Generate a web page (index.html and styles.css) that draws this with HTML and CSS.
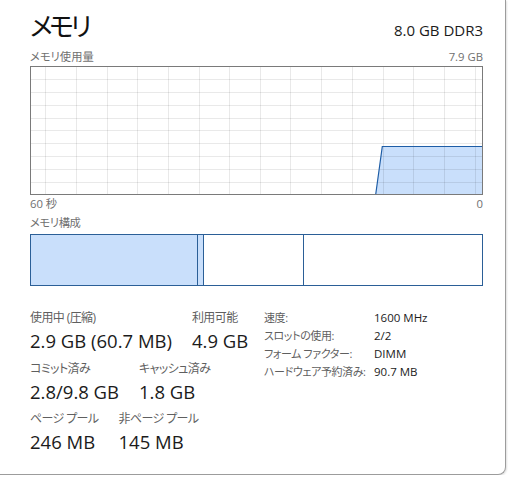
FILE: index.html
```html
<!DOCTYPE html>
<html lang="ja">
<head>
<meta charset="utf-8">
<title>メモリ</title>
<link rel="stylesheet" href="styles.css">
</head>
<body>
<div class="window">
  <div class="header">
    <div class="title">メモリ</div>
    <div class="spec">8.0 GB DDR3</div>
  </div>
  <div class="axis axis-top"><span>メモリ使用量</span><span>7.9 GB</span></div>
  <svg class="graph" width="453" height="129" viewBox="0 0 453 129">
    <rect x="0" y="0" width="453" height="129" fill="#ffffff"/>
    <polygon points="345.7,128.5 352.3,80 452.5,80 452.5,128.5" fill="#c9dffb"/>
    <g stroke="rgba(0,0,0,0.085)" stroke-width="1">
      <line x1="15.5" y1="0" x2="15.5" y2="129"/>
      <line x1="46.5" y1="0" x2="46.5" y2="129"/>
      <line x1="77.5" y1="0" x2="77.5" y2="129"/>
      <line x1="107.5" y1="0" x2="107.5" y2="129"/>
      <line x1="138.5" y1="0" x2="138.5" y2="129"/>
      <line x1="169.5" y1="0" x2="169.5" y2="129"/>
      <line x1="199.5" y1="0" x2="199.5" y2="129"/>
      <line x1="230.5" y1="0" x2="230.5" y2="129"/>
      <line x1="260.5" y1="0" x2="260.5" y2="129"/>
      <line x1="291.5" y1="0" x2="291.5" y2="129"/>
      <line x1="322.5" y1="0" x2="322.5" y2="129"/>
      <line x1="353.5" y1="0" x2="353.5" y2="129"/>
      <line x1="383.5" y1="0" x2="383.5" y2="129"/>
      <line x1="414.5" y1="0" x2="414.5" y2="129"/>
      <line x1="445.5" y1="0" x2="445.5" y2="129"/>
      <line x1="0" y1="13.5" x2="453" y2="13.5"/>
      <line x1="0" y1="26.5" x2="453" y2="26.5"/>
      <line x1="0" y1="39.5" x2="453" y2="39.5"/>
      <line x1="0" y1="52.5" x2="453" y2="52.5"/>
      <line x1="0" y1="64.5" x2="453" y2="64.5"/>
      <line x1="0" y1="77.5" x2="453" y2="77.5"/>
      <line x1="0" y1="90.5" x2="453" y2="90.5"/>
      <line x1="0" y1="103.5" x2="453" y2="103.5"/>
      <line x1="0" y1="116.5" x2="453" y2="116.5"/>
    </g>
    <polyline points="345.7,128.5 352.3,80.5 452.5,80.5" fill="none" stroke="#1e5da6" stroke-width="1.2"/>
    <rect x="0.5" y="0.5" width="452" height="128" fill="none" stroke="#7a7a7a" stroke-width="1"/>
  </svg>
  <div class="axis axis-bottom"><span>60 秒</span><span>0</span></div>
  <div class="section-label">メモリ構成</div>
  <div class="composition">
    <div class="seg seg-filled" style="width:167px"></div>
    <div class="seg seg-filled" style="width:6px"></div>
    <div class="seg" style="width:100px"></div>
    <div class="seg seg-free"></div>
  </div>
  <div class="stats">
    <div class="stats-left">
      <div class="stat-row">
        <div class="stat"><div class="stat-label">使用中 (圧縮)</div><div class="stat-value">2.9 GB (60.7 MB)</div></div>
        <div class="stat"><div class="stat-label">利用可能</div><div class="stat-value">4.9 GB</div></div>
      </div>
      <div class="stat-row">
        <div class="stat"><div class="stat-label">コミット済み</div><div class="stat-value">2.8/9.8 GB</div></div>
        <div class="stat"><div class="stat-label">キャッシュ済み</div><div class="stat-value">1.8 GB</div></div>
      </div>
      <div class="stat-row">
        <div class="stat"><div class="stat-label">ページ プール</div><div class="stat-value">246 MB</div></div>
        <div class="stat"><div class="stat-label">非ページ プール</div><div class="stat-value">145 MB</div></div>
      </div>
    </div>
    <dl class="details">
      <dt>速度:</dt><dd>1600 MHz</dd>
      <dt>スロットの使用:</dt><dd>2/2</dd>
      <dt>フォーム ファクター:</dt><dd>DIMM</dd>
      <dt>ハードウェア予約済み:</dt><dd>90.7 MB</dd>
    </dl>
  </div>
</div>
</body>
</html>
```
FILE: styles.css
```css
html, body {
  margin: 0;
  padding: 0;
  background: #ffffff;
}

body {
  font-family: "Open Sans", "Noto Sans CJK JP", sans-serif;
  font-feature-settings: "palt";
  color: #1b1b1b;
}

.window {
  box-sizing: border-box;
  width: 506px;
  height: 475px;
  padding: 0 22px 0 30px;
  background: #ffffff;
  border-right: 1px solid #9c9c9c;
  border-bottom: 1px solid #9c9c9c;
  border-bottom-right-radius: 8px;
  box-shadow: 1px 1px 2px rgba(0, 0, 0, 0.12);
  overflow: hidden;
}

.header {
  display: flex;
  justify-content: space-between;
  align-items: baseline;
  padding-top: 10px;
}

.title {
  font-family: "Noto Sans CJK JP", sans-serif;
  font-size: 26px;
  line-height: 30px;
  color: #111111;
  letter-spacing: -3.5px;
}

.spec {
  font-size: 15px;
  color: #1b1b1b;
}

.axis {
  display: flex;
  justify-content: space-between;
  font-size: 11.3px;
  line-height: 14px;
  color: #707070;
}

.axis-top {
  margin-top: 10px;
}

.graph {
  display: block;
  margin-top: 2px;
}

.axis-bottom {
  margin-top: 2px;
}

.section-label {
  margin-top: 5px;
  font-size: 11.3px;
  line-height: 14px;
  color: #707070;
  letter-spacing: -0.4px;
}

.composition {
  box-sizing: border-box;
  display: flex;
  height: 52px;
  margin-top: 4px;
  border: 1px solid #2b5f97;
}

.seg {
  box-sizing: border-box;
  height: 100%;
  border-right: 1px solid #2b5f97;
}

.seg-filled {
  background: #c9dffb;
}

.seg-free {
  flex: 1;
  border-right: none;
}

.stats {
  display: flex;
  align-items: flex-start;
  margin-top: 23px;
}

.stats-left {
  width: 234px;
  flex: none;
}

.stat-row {
  display: flex;
  gap: 20px;
  margin-bottom: 4.5px;
}

.stat-label {
  font-size: 12px;
  line-height: 18px;
  color: #5f5f5f;
  letter-spacing: -0.6px;
  white-space: nowrap;
}

.stat-value {
  font-size: 18.5px;
  line-height: 28px;
  color: #1b1b1b;
  white-space: nowrap;
}

.details {
  display: grid;
  grid-template-columns: 110px auto;
  align-content: start;
  margin: 0;
  line-height: 18px;
}

.details dt {
  font-size: 11px;
  letter-spacing: -0.4px;
  color: #5f5f5f;
  white-space: nowrap;
}

.details dd {
  margin: 0;
  font-size: 11.5px;
  color: #1b1b1b;
  white-space: nowrap;
}
```
